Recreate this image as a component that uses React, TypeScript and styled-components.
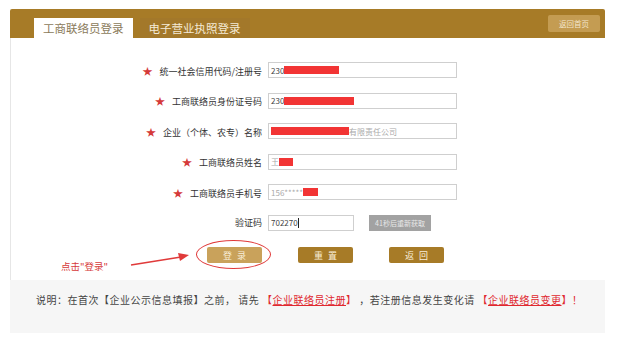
import styled, { createGlobalStyle } from 'styled-components';

const GlobalStyle = createGlobalStyle`
  body {
    margin: 0;
    background: #fff;
    font-family: "Noto Sans CJK SC", "Noto Sans", "Liberation Sans", sans-serif;
    color: #333;
  }
`;

const Page = styled.div`
  width: 595px;
  padding: 9px 0 0 10px;
`;

const Header = styled.div`
  height: 29px;
  background: #a77b27;
  border-radius: 2px 2px 0 0;
  display: flex;
  align-items: flex-end;
  padding-left: 24px;
  position: relative;
`;

const Tab = styled.div<{ $active?: boolean }>`
  height: 20px;
  padding: 0 9px;
  display: flex;
  align-items: center;
  font-size: 11.5px;
  margin-right: 7px;
  background: ${({ $active }) => ($active ? '#fff' : '#a3782a')};
  color: ${({ $active }) => ($active ? '#8a7a5a' : '#f4ead6')};
`;

const HomeButton = styled.div`
  position: absolute;
  right: 5px;
  top: 6px;
  height: 17px;
  width: 52px;
  background: #c49c52;
  border-radius: 2px;
  color: #f3e6cc;
  font-size: 7.5px;
  display: flex;
  align-items: center;
  justify-content: center;
`;

const Content = styled.div`
  border-left: 1px solid #e6e6e6;
  height: 242px;
  padding-top: 24px;
  box-sizing: border-box;
  display: flex;
  flex-direction: column;
  gap: 14.5px;
`;

const Row = styled.div`
  display: flex;
  align-items: center;
  height: 16px;
`;

const Label = styled.div`
  width: 257px;
  text-align: right;
  font-size: 9px;
  color: #333;
  white-space: nowrap;
  padding-right: 6px;
  box-sizing: border-box;
`;

const Star = styled.span`
  color: #d53a3a;
  font-size: 10px;
  margin-right: 7px;
`;

const Field = styled.div<{ $w?: number }>`
  width: ${({ $w }) => $w ?? 189}px;
  height: 16px;
  border: 1px solid #cfcfcf;
  box-sizing: border-box;
  display: flex;
  align-items: center;
  padding-left: 2px;
  font-size: 8px;
  color: #444;
  background: #fff;
`;

const Muted = styled.span`
  color: #aaa;
`;

const Redact = styled.span<{ $w: number }>`
  display: inline-block;
  width: ${({ $w }) => $w}px;
  height: 8px;
  background: #f23434;
`;

const Caret = styled.span`
  display: inline-block;
  width: 1px;
  height: 10px;
  background: #222;
`;

const CodeButton = styled.div`
  margin-left: 15px;
  width: 62px;
  height: 16px;
  background: #a2a2a2;
  color: #e8e8e8;
  font-size: 7px;
  display: flex;
  align-items: center;
  justify-content: center;
`;

const Actions = styled.div`
  display: flex;
  gap: 36px;
  padding-left: 196px;
  margin-top: 2px;
  position: relative;
`;

const ActionButton = styled.div<{ $light?: boolean }>`
  width: 55px;
  height: 16px;
  border-radius: 2px;
  background: ${({ $light }) => ($light ? '#c9a25b' : '#a77b27')};
  color: #f8eed9;
  font-size: 9px;
  letter-spacing: 5px;
  text-indent: 5px;
  display: flex;
  align-items: center;
  justify-content: center;
  position: relative;
`;

const Ring = styled.div`
  position: absolute;
  left: -11px;
  top: -7px;
  width: 75px;
  height: 29px;
  border: 1.5px solid #e03a3a;
  border-radius: 50%;
  box-sizing: border-box;
`;

const Hint = styled.div`
  position: absolute;
  left: 50px;
  top: 12px;
  color: #d63a3a;
  font-size: 9.5px;
`;

const Arrow = styled.svg`
  position: absolute;
  left: 118px;
  top: 4px;
`;

const Footer = styled.div`
  height: 53px;
  background: #f6f6f6;
  padding: 12px 0 0 26px;
  box-sizing: border-box;
  font-size: 10px;
  letter-spacing: 0.5px;
  color: #444;
  white-space: nowrap;
`;

const Link = styled.span`
  color: #e0282f;
  u {
    text-decoration: underline;
  }
`;

const App = () => {
  return (
    <>
      <GlobalStyle />
      <Page>
        <Header>
          <Tab $active>工商联络员登录</Tab>
          <Tab>电子营业执照登录</Tab>
          <HomeButton>返回首页</HomeButton>
        </Header>
        <Content>
          <Row>
            <Label>
              <Star>★</Star>统一社会信用代码/注册号
            </Label>
            <Field>
              230<Redact $w={55} />
            </Field>
          </Row>
          <Row>
            <Label>
              <Star>★</Star>工商联络员身份证号码
            </Label>
            <Field>
              230<Redact $w={70} />
            </Field>
          </Row>
          <Row>
            <Label>
              <Star>★</Star>企业（个体、农专）名称
            </Label>
            <Field>
              <Redact $w={78} />
              <Muted>有限责任公司</Muted>
            </Field>
          </Row>
          <Row>
            <Label>
              <Star>★</Star>工商联络员姓名
            </Label>
            <Field>
              <Muted>王</Muted>
              <Redact $w={14} />
            </Field>
          </Row>
          <Row>
            <Label>
              <Star>★</Star>工商联络员手机号
            </Label>
            <Field>
              <Muted>156*****</Muted>
              <Redact $w={15} />
            </Field>
          </Row>
          <Row>
            <Label>验证码</Label>
            <Field $w={86}>
              702270
              <Caret />
            </Field>
            <CodeButton>41秒后重新获取</CodeButton>
          </Row>
          <Actions>
            <Hint>点击"登录"</Hint>
            <Arrow width="62" height="16" viewBox="0 0 62 16">
              <line x1="2" y1="14" x2="52" y2="6" stroke="#e03a3a" strokeWidth="1.6" />
              <polygon points="60,4 49,2 51,10" fill="#e03a3a" />
            </Arrow>
            <ActionButton $light>
              登录
              <Ring />
            </ActionButton>
            <ActionButton>重置</ActionButton>
            <ActionButton>返回</ActionButton>
          </Actions>
        </Content>
        <Footer>
          说明：在首次【企业公示信息填报】之前， 请先 <Link>【<u>企业联络员注册</u>】</Link> ，若注册信息发生变化请{' '}
          <Link>【<u>企业联络员变更</u>】！</Link>
        </Footer>
      </Page>
    </>
  );
};

export default App;
